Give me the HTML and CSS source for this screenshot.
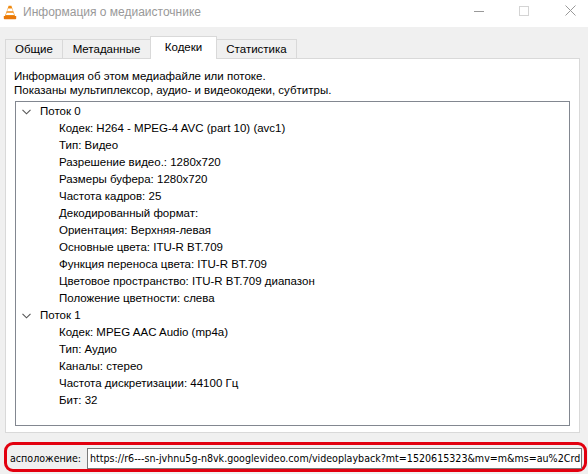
FILE: index.html
```html
<!DOCTYPE html>
<html lang="ru">
<head>
<meta charset="utf-8">
<title>Информация о медиаисточнике</title>
<link rel="stylesheet" href="styles.css">
</head>
<body>
<div class="window">
  <div class="titlebar">
    <svg class="appicon" width="14" height="15" viewBox="0 0 14 15">
      <path d="M5.6 0.8 L8.4 0.8 L12 11 L2 11 Z" fill="#f08a10"/>
      <path d="M4.9 3.6 L9.1 3.6 L9.9 6.2 L4.1 6.2 Z" fill="#fff"/>
      <path d="M3.7 7.8 L10.3 7.8 L11.1 10 L2.9 10 Z" fill="#fff"/>
      <path d="M0.8 11 L13.2 11 L13.2 13.6 Q13.2 14.3 12.5 14.3 L1.5 14.3 Q0.8 14.3 0.8 13.6 Z" fill="#e8780a"/>
    </svg>
    <span class="title">Информация о медиаисточнике</span>
    <div class="controls">
      <span class="ctl ctl-min"><svg width="10" height="10" viewBox="0 0 10 10"><path d="M0 5.5 H10" stroke="#999" stroke-width="1"/></svg></span>
      <span class="ctl ctl-max"><svg width="10" height="10" viewBox="0 0 10 10"><rect x="0.5" y="0.5" width="9" height="9" fill="none" stroke="#d4d4d4" stroke-width="1"/></svg></span>
      <span class="ctl ctl-close"><svg width="11" height="11" viewBox="0 0 11 11"><path d="M0.5 0.5 L10.5 10.5 M10.5 0.5 L0.5 10.5" stroke="#999" stroke-width="1"/></svg></span>
    </div>
  </div>

  <div class="body">
    <div class="tabs">
      <div class="tab tab-general">Общие</div>
      <div class="tab tab-meta">Метаданные</div>
      <div class="tab tab-codecs active">Кодеки</div>
      <div class="tab tab-stats">Статистика</div>
    </div>
    <div class="panel">
      <div class="intro">
        <div>Информация об этом медиафайле или потоке.</div>
        <div>Показаны мультиплексор, аудио- и видеокодеки, субтитры.</div>
      </div>
      <div class="tree">
        <div class="row stream"><svg class="chev" width="9" height="6" viewBox="0 0 9 6"><path d="M0.5 0.8 L4.5 4.8 L8.5 0.8" fill="none" stroke="#555" stroke-width="1.1"/></svg>Поток 0</div>
        <div class="row child">Кодек: H264 - MPEG-4 AVC (part 10) (avc1)</div>
        <div class="row child">Тип: Видео</div>
        <div class="row child">Разрешение видео.: 1280x720</div>
        <div class="row child">Размеры буфера: 1280x720</div>
        <div class="row child">Частота кадров: 25</div>
        <div class="row child">Декодированный формат:</div>
        <div class="row child">Ориентация: Верхняя-левая</div>
        <div class="row child">Основные цвета: ITU-R BT.709</div>
        <div class="row child">Функция переноса цвета: ITU-R BT.709</div>
        <div class="row child">Цветовое пространство: ITU-R BT.709 диапазон</div>
        <div class="row child">Положение цветности: слева</div>
        <div class="row stream"><svg class="chev" width="9" height="6" viewBox="0 0 9 6"><path d="M0.5 0.8 L4.5 4.8 L8.5 0.8" fill="none" stroke="#555" stroke-width="1.1"/></svg>Поток 1</div>
        <div class="row child">Кодек: MPEG AAC Audio (mp4a)</div>
        <div class="row child">Тип: Аудио</div>
        <div class="row child">Каналы: стерео</div>
        <div class="row child">Частота дискретизации: 44100 Гц</div>
        <div class="row child">Бит: 32</div>
      </div>
    </div>
    <div class="location">
      <span class="loc-label">асположение:</span>
      <div class="loc-input">https://r6---sn-jvhnu5g-n8vk.googlevideo.com/videoplayback?mt=1520615323&amp;mv=m&amp;ms=au%2Crd</div>
    </div>
  </div>
</div>
</body>
</html>
```

FILE: styles.css
```css
html, body {
  margin: 0;
  padding: 0;
}
body {
  width: 588px;
  height: 474px;
  overflow: hidden;
  background: #f0f0f0;
  font-family: "Liberation Sans", Arial, sans-serif;
  font-size: 11.5px;
  color: #000;
}
.window {
  display: flex;
  flex-direction: column;
  height: 474px;
}
.titlebar {
  height: 27px;
  background: #fff;
  display: flex;
  align-items: center;
  flex: none;
}
.appicon {
  margin-left: 3px;
  margin-top: -2px;
  flex: none;
}
.title {
  margin-left: 6px;
  color: #999;
  font-size: 12px;
  margin-top: -3px;
}
.controls {
  margin-left: auto;
  display: flex;
  align-items: center;
  margin-top: -6px;
}
.ctl {
  display: flex;
  align-items: center;
  justify-content: center;
}
.ctl-min { margin-right: 35px; }
.ctl-max { margin-right: 36px; }
.ctl-close { margin-right: 12px; }

.body {
  flex: 1;
  padding: 10px 0 0 5px;
  display: flex;
  flex-direction: column;
}
.tabs {
  display: flex;
  align-items: flex-end;
  height: 21px;
  position: relative;
  z-index: 2;
}
.tab {
  box-sizing: border-box;
  height: 19px;
  border: 1px solid #d9d9d9;
  border-bottom: none;
  background: #f0f0f0;
  display: flex;
  align-items: center;
  justify-content: center;
  margin-right: -1px;
  padding-bottom: 0;
}
.tab-general { width: 58px; }
.tab-meta { width: 89px; }
.tab-codecs { width: 67px; }
.tab-stats { width: 81px; }
.tab.active {
  background: #fff;
  height: 23px;
  margin-bottom: -1px;
  padding-bottom: 2px;
  position: relative;
  z-index: 3;
}
.panel {
  box-sizing: border-box;
  width: 575px;
  height: 375px;
  background: #fff;
  border: 1px solid #d9d9d9;
  padding: 10px 10px 6px 8px;
  display: flex;
  flex-direction: column;
  flex: none;
}
.intro {
  line-height: 14px;
}
.tree {
  margin-top: 4px;
  margin-left: 1px;
  box-sizing: border-box;
  width: 555px;
  height: 325px;
  border: 1px solid #828790;
  padding-top: 1px;
}
.row {
  height: 17px;
  line-height: 17px;
  white-space: nowrap;
  display: flex;
  align-items: center;
}
.stream {
  padding-left: 6px;
}
.chev {
  margin-right: 9px;
  flex: none;
}
.child {
  padding-left: 43px;
}
.location {
  margin-top: 9px;
  margin-left: -1px;
  box-sizing: border-box;
  width: 583px;
  height: 30px;
  border: 3px solid #e2000f;
  border-radius: 9px;
  display: flex;
  align-items: center;
  padding-left: 3px;
  font-family: "DejaVu Sans Condensed", "DejaVu Sans", sans-serif;
  font-size: 10.6px;
}
.loc-label {
  width: 77px;
  flex: none;
  padding-top: 2px;
}
.loc-input {
  box-sizing: border-box;
  width: 495px;
  height: 21px;
  margin-top: 3px;
  background: #fff;
  border: 1px solid #7a7a7a;
  padding: 3px 0 0 2px;
  white-space: nowrap;
  overflow: hidden;
  color: #000;
}
```
